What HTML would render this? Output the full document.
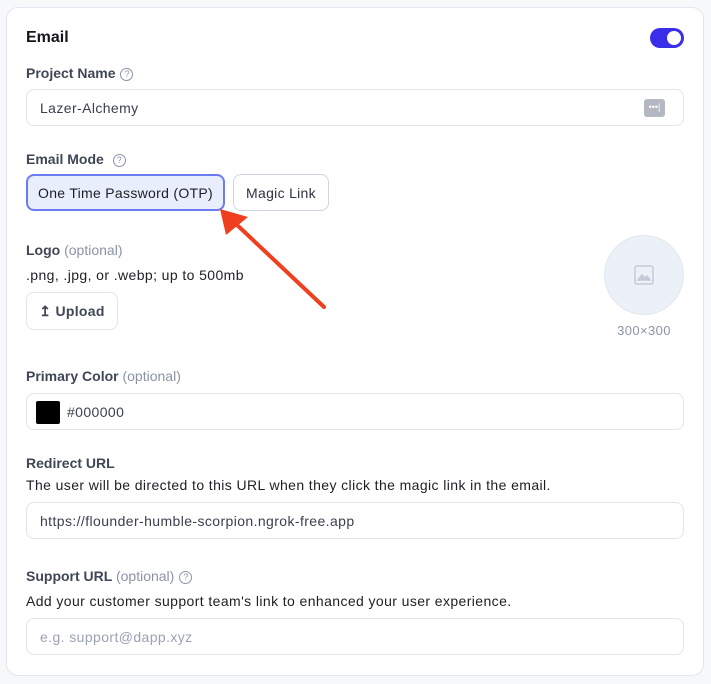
<!DOCTYPE html>
<html><head><meta charset="utf-8"><style>
*{box-sizing:border-box;margin:0;padding:0}
body{width:711px;height:684px;background:#f7f8fa;font-family:"Liberation Sans",sans-serif;position:relative;overflow:hidden}
.card{position:absolute;left:6px;top:7px;width:698px;height:669px;background:#fff;border:1px solid #e3e6ee;border-radius:12px}
.a{position:absolute}
.lbl{font-size:14px;font-weight:bold;color:#3f4656}
.opt{font-weight:normal;color:#8b93a7}
.txt{font-size:14px;color:#1d1f24;letter-spacing:0.4px}
.inp{position:absolute;left:26px;width:658px;height:37px;border:1px solid #e2e5ee;border-radius:8px;font-size:14px;color:#3b4050;padding-left:13px;line-height:36px;letter-spacing:0.4px}
.q{display:inline-block;width:13px;height:13px;border:1px solid #8b93a7;border-radius:50%;font-size:9px;line-height:11px;text-align:center;color:#8b93a7;font-weight:normal;vertical-align:1px;margin-left:5px}
.btn{position:absolute;height:37px;border-radius:8px;font-size:14px;line-height:36px;text-align:center;color:#2d3140;letter-spacing:0.3px}
</style></head><body>
<div class="card"></div>
<div class="a" style="left:26px;top:29px;font-size:16px;font-weight:bold;color:#14161b">Email</div>
<div class="a" style="left:650px;top:28px;width:34px;height:20px;border-radius:10px;background:#3a2ee8"><div style="position:absolute;right:3px;top:3px;width:14px;height:14px;border-radius:50%;background:#fff"></div></div>
<div class="a lbl" style="left:26px;top:65px">Project Name<span class="q">?</span></div>
<div class="inp" style="top:89px">Lazer-Alchemy<div style="position:absolute;right:18px;top:9px;width:21px;height:18px;background:#b3b8c3;border-radius:3px;color:#fff;font-size:9px;line-height:17px;text-align:center;letter-spacing:0">•••|</div></div>
<div class="a lbl" style="left:26px;top:151px">Email Mode<span class="q" style="margin-left:9px">?</span></div>
<div class="btn" style="left:26px;top:174px;width:199px;background:#e9eefc;border:2px solid #6b7bf0;line-height:34px;color:#1d1f24">One Time Password (OTP)</div>
<div class="btn" style="left:233px;top:174px;width:96px;border:1px solid #cfd5e3">Magic Link</div>
<div class="a lbl" style="left:26px;top:242px">Logo <span class="opt">(optional)</span></div>
<div class="a txt" style="left:26px;top:267px">.png, .jpg, or .webp; up to 500mb</div>
<div class="btn" style="left:26px;top:292px;width:92px;height:38px;border:1px solid #e2e5ee;font-weight:bold;color:#3f4656;line-height:37px">&#8613; Upload</div>
<div class="a" style="left:604px;top:235px;width:80px;height:80px;border-radius:50%;background:#ecf0f7;border:1px solid #e2e6ef">
<svg style="position:absolute;left:29px;top:29px" width="20" height="20" viewBox="0 0 20 20" fill="none" stroke="#c4cad6" stroke-width="1.5"><rect x="1" y="1" width="18" height="18" rx="2"/><path d="M4 15l4-5 3 3 2-2 3 4z" fill="#c4cad6"/></svg></div>
<div class="a" style="left:600px;top:323px;width:88px;text-align:center;font-size:13px;color:#8b93a7;letter-spacing:0.4px">300×300</div>
<div class="a lbl" style="left:26px;top:368px">Primary Color <span class="opt">(optional)</span></div>
<div class="inp" style="top:393px;padding-left:40px"><div style="position:absolute;left:9px;top:7px;width:24px;height:23px;background:#000;border-radius:2px"></div>#000000</div>
<div class="a lbl" style="left:26px;top:455px">Redirect URL</div>
<div class="a txt" style="left:26px;top:477px">The user will be directed to this URL when they click the magic link in the email.</div>
<div class="inp" style="top:502px">https://flounder-humble-scorpion.ngrok-free.app</div>
<div class="a lbl" style="left:26px;top:568px">Support URL <span class="opt">(optional)</span><span class="q">?</span></div>
<div class="a txt" style="left:26px;top:593px">Add your customer support team's link to enhanced your user experience.</div>
<div class="inp" style="top:618px;color:#9aa1b3">e.g. support@dapp.xyz</div>
<svg class="a" style="left:0;top:0" width="711" height="684"><line x1="324" y1="307" x2="236" y2="224" stroke="#ef3f1e" stroke-width="4" stroke-linecap="round"/><polygon points="220,209 248,217 226,235" fill="#ef3f1e"/></svg>
</body></html>
